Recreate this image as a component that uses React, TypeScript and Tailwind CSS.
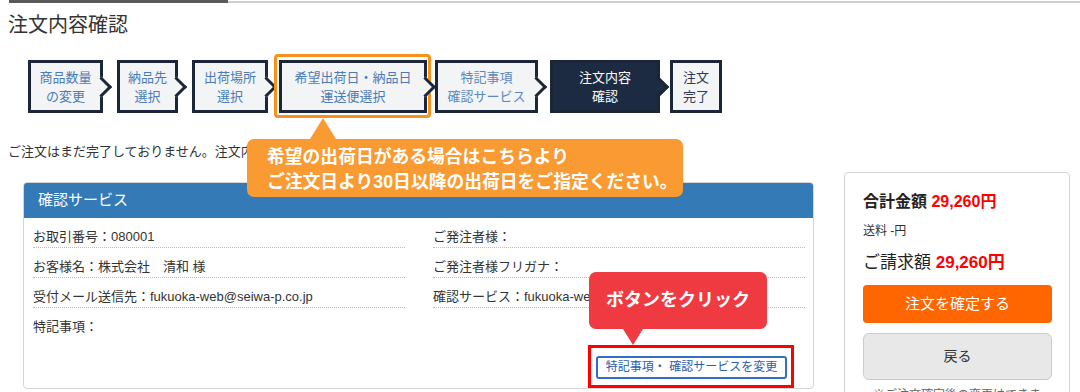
import React from 'react';

type Step = {
  lines: string[];
  wrap: string;
  tone: 'light' | 'soft' | 'active' | 'done';
  arrow: boolean;
};

const steps: Step[] = [
  { lines: ['商品数量', 'の変更'], wrap: 'ml-[28px] mt-[6px] w-[75px]', tone: 'light', arrow: true },
  { lines: ['納品先', '選択'], wrap: 'ml-[14px] mt-[6px] w-[61px]', tone: 'light', arrow: true },
  { lines: ['出荷場所', '選択'], wrap: 'ml-[14px] mt-[6px] w-[76px]', tone: 'light', arrow: true },
];

const laterSteps: Step[] = [
  { lines: ['特記事項', '確認サービス'], wrap: 'ml-[4px] mt-[6px] w-[103px]', tone: 'soft', arrow: true },
  { lines: ['注文内容', '確認'], wrap: 'ml-[12px] mt-[6px] w-[110px]', tone: 'active', arrow: true },
  { lines: ['注文', '完了'], wrap: 'ml-[10px] mt-[6px] w-[52px]', tone: 'done', arrow: false },
];

const toneBox: Record<Step['tone'], string> = {
  light: 'border-[#1c2639] bg-[#f3f4f6] text-[#4a7bb6]',
  soft: 'border-[#1c2639] bg-[#f3f4f6] text-[#5a88c0]',
  active: 'border-[#1c2639] bg-[#1c2a42] text-white',
  done: 'border-[#1c2639] bg-[#f3f4f6] text-[#2d3a4f]',
};

const toneArrow: Record<Step['tone'], string> = {
  light: 'border-[#1c2639] bg-[#f3f4f6]',
  soft: 'border-[#1c2639] bg-[#f3f4f6]',
  active: 'border-[#1c2639] bg-[#1c2a42]',
  done: 'border-[#1c2639] bg-[#f3f4f6]',
};

const StepBox: React.FC<{ step: Step }> = ({ step }) => (
  <div
    className={`relative flex h-[53px] shrink-0 items-center justify-center border-[3px] text-center text-[13px] leading-[19px] ${step.wrap} ${toneBox[step.tone]}`}
  >
    <div>
      {step.lines.map((l) => (
        <div key={l} className="whitespace-nowrap">{l}</div>
      ))}
    </div>
    {step.arrow && (
      <span
        className={`absolute right-[-9px] top-1/2 h-[15px] w-[15px] -translate-y-1/2 rotate-45 border-t-[3px] border-r-[3px] ${toneArrow[step.tone]}`}
      />
    )}
  </div>
);

const Row: React.FC<{ children: React.ReactNode; line?: boolean }> = ({ children, line = true }) => (
  <div
    className={`h-[30px] pt-[9px] text-[13px] leading-[20px] text-[#333] whitespace-nowrap ${
      line ? 'border-b border-dotted border-[#bdbdbd]' : ''
    }`}
  >
    {children}
  </div>
);

export default function App() {
  return (
    <div className="relative h-[392px] w-[1080px] overflow-hidden bg-white font-['Liberation_Sans','Noto_Sans_CJK_JP',sans-serif] text-[#333]">
      {/* top rule */}
      <div className="flex items-start">
        <div className="ml-[9px] h-[3px] w-[219px] bg-[#5a5a5a]" />
        <div className="mt-[1px] h-[2px] flex-1 bg-[#d0d0d0]" />
      </div>

      <h1 className="ml-[8px] mt-[9px] text-[20px] leading-[26px] text-[#333]">注文内容確認</h1>

      {/* progress steps */}
      <div className="mt-[16px] flex h-[64px] items-start">
        {steps.map((s) => (
          <StepBox key={s.lines.join()} step={s} />
        ))}

        <div className="relative ml-[6px] shrink-0 rounded-[4px] border-[3px] border-[#f7911c] pb-[2px] pl-[2px] pr-[1px] pt-[3px]">
          <StepBox
            step={{ lines: ['希望出荷日・納品日', '運送便選択'], wrap: 'w-[148px]', tone: 'light', arrow: true }}
          />
          {/* orange hint */}
          <div className="absolute left-[-30px] top-[calc(100%+3px)] z-10">
            <div className="ml-[63px] h-0 w-0 border-x-[13px] border-b-[21px] border-x-transparent border-b-[#fa9a32]" />
            <div className="h-[58px] w-[436px] whitespace-nowrap rounded-[7px] bg-[#fa9a32] pl-[20px] pt-[6px] text-[17.8px] font-bold leading-[25px] text-white">
              <div>希望の出荷日がある場合はこちらより</div>
              <div>ご注文日より30日以降の出荷日をご指定ください。</div>
            </div>
          </div>
        </div>

        {laterSteps.map((s) => (
          <StepBox key={s.lines.join()} step={s} />
        ))}
      </div>

      <p className="ml-[8px] mt-[24px] text-[13px] leading-[20px] text-[#333]">
        ご注文はまだ完了しておりません。注文内容をご確認の上、「注文を確定する」ボタンを押してください。
      </p>

      <div className="mt-[10px] flex items-start">
        {/* confirm service panel */}
        <div className="ml-[23px] mt-[10px] w-[791px] overflow-hidden rounded-[4px] border border-[#d6d6d6]">
          <div className="-mx-px -mt-px h-[36px] bg-[#337ab7] pl-[15px] pt-[6px] text-[15px] leading-[24px] text-white">
            確認サービス
          </div>
          <div className="grid grid-cols-2 gap-x-[28px] pl-[9px] pr-[8px]">
            <div className="flex flex-col">
              <Row>お取引番号：080001</Row>
              <Row>お客様名：株式会社　清和 様</Row>
              <Row>受付メール送信先：fukuoka-web@seiwa-p.co.jp</Row>
              <Row line={false}>特記事項：</Row>
            </div>
            <div className="flex flex-col">
              <Row>ご発注者様：</Row>
              <Row>ご発注者様フリガナ：</Row>
              <Row>確認サービス：fukuoka-web@seiwa-p.co.jp</Row>
            </div>
          </div>
          <div className="mt-[7px] flex justify-end pr-[19px]">
            <div className="relative border-[3px] border-[#ff0000] pb-[6px] pl-[5px] pr-[4px] pt-[6px]">
              <button className="h-[23px] w-[191px] rounded-[3px] border-2 border-[#2f6fc6] bg-white text-[12px] leading-[19px] text-[#2a5eb0]">
                特記事項・ 確認サービスを変更
              </button>
              {/* red hint */}
              <div className="absolute bottom-[calc(100%+3px)] left-[-2px] z-10">
                <div className="flex h-[57px] w-[178px] items-center justify-center rounded-[7px] bg-[#f03a42] text-[18px] font-bold text-white">
                  ボタンをクリック
                </div>
                <div className="ml-[34px] h-0 w-0 border-x-[10px] border-t-[16px] border-x-transparent border-t-[#f03a42]" />
              </div>
            </div>
          </div>
        </div>

        {/* totals sidebar */}
        <div className="ml-[30px] w-[226px] rounded-[4px] border border-[#d6d6d6] pb-[20px] pl-[18px] pr-[17px] pt-[18px]">
          <div className="text-[16px] font-bold leading-[22px] text-[#222]">
            合計金額 <span className="text-[#ff0000]">29,260円</span>
          </div>
          <div className="mt-[9px] text-[12px] leading-[18px] text-[#333]">送料 -円</div>
          <div className="mt-[11px] text-[17px] leading-[24px] text-[#222]">
            ご請求額 <span className="font-bold text-[#ff0000]">29,260円</span>
          </div>
          <button className="mt-[10px] h-[38px] w-full rounded-[4px] bg-[#ff6600] text-[15px] text-white">
            注文を確定する
          </button>
          <button className="mt-[10px] h-[47px] w-full rounded-[6px] border border-[#cccccc] bg-[#e8e8e8] text-[14px] text-[#333]">
            戻る
          </button>
          <div className="mt-[6px] pl-[10px] text-[12px] leading-[18px] text-[#666]">※ご注文確定後の変更はできません。</div>
        </div>
      </div>
    </div>
  );
}
